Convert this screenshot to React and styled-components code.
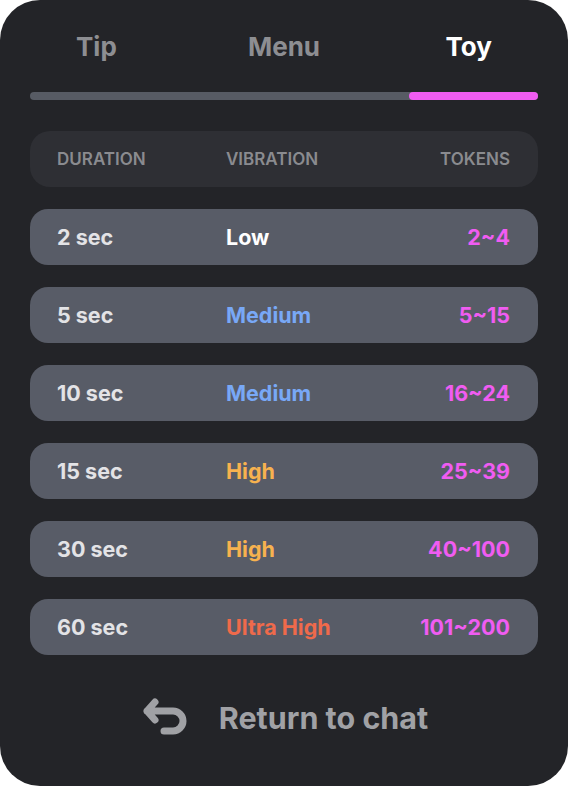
import React, { useState } from "react";
import styled, { createGlobalStyle } from "styled-components";

const Global = createGlobalStyle`
  html, body { margin: 0; padding: 0; background: #ffffff; }
  body { font-family: Inter, "Noto Sans", "Liberation Sans", sans-serif; -webkit-font-smoothing: antialiased; }
  * { box-sizing: border-box; }
`;

const Card = styled.div`
  width: 568px;
  height: 786px;
  background: #232428;
  border-radius: 40px;
  padding: 27px 30px 0;
  display: flex;
  flex-direction: column;
`;

const Tabs = styled.div`
  display: grid;
  grid-template-columns: 1fr auto 1fr;
  padding: 0 46px;
  height: 40px;
  align-items: center;
`;

const Tab = styled.button`
  justify-self: ${(p) => p.$align};
  background: none;
  border: none;
  padding: 0;
  font-family: inherit;
  font-size: 26px;
  font-weight: 700;
  line-height: 40px;
  color: ${(p) => (p.$active ? "#ffffff" : "#8d8e92")};
  cursor: pointer;
`;

const Track = styled.div`
  margin-top: 25px;
  height: 8px;
  border-radius: 4px;
  background: #575b64;
  display: flex;
  justify-content: flex-end;
`;

const Fill = styled.div`
  height: 8px;
  border-radius: 4px;
  background: #f05cf2;
`;

const Grid = styled.div`
  display: grid;
  grid-template-columns: 169px 1fr auto;
  align-items: center;
  height: 56px;
  padding: 0 28px 0 27px;
`;

const HeaderRow = styled(Grid)`
  margin-top: 31px;
  background: #2e2f34;
  border-radius: 20px;
`;

const HeadCell = styled.div`
  font-size: 17px;
  font-weight: 600;
  color: #8a8b8f;
  text-transform: uppercase;
  text-align: ${(p) => (p.$right ? "right" : "left")};
`;

const Rows = styled.div`
  margin-top: 22px;
  display: flex;
  flex-direction: column;
  gap: 22px;
`;

const Row = styled(Grid)`
  background: #585c67;
  border-radius: 18px;
`;

const Cell = styled.div`
  font-size: 21.5px;
  font-weight: 700;
  color: ${(p) => p.$color || "#e3e3e6"};
  text-align: ${(p) => (p.$right ? "right" : "left")};
`;

const ReturnButton = styled.button`
  margin-top: 34px;
  height: 56px;
  align-self: center;
  display: flex;
  align-items: center;
  gap: 29px;
  background: none;
  border: none;
  padding: 0;
  font-family: inherit;
  font-size: 30.5px;
  font-weight: 700;
  color: #a0a1a5;
  cursor: pointer;
`;

const levelColors = {
  Low: "#ffffff",
  Medium: "#78a8f6",
  High: "#f7b24f",
  "Ultra High": "#ef6a4b",
};

const data = [
  ["2 sec", "Low", "2~4"],
  ["5 sec", "Medium", "5~15"],
  ["10 sec", "Medium", "16~24"],
  ["15 sec", "High", "25~39"],
  ["30 sec", "High", "40~100"],
  ["60 sec", "Ultra High", "101~200"],
];

const tabs = [
  ["Tip", "start"],
  ["Menu", "center"],
  ["Toy", "end"],
];

const UndoIcon = () => (
  <svg width="50" height="44" viewBox="0 0 50 44" fill="none">
    <path
      d="M15 7 L7 16 L15 25 M7 16 H33 A10 10 0 0 1 33 36 H24"
      stroke="#a0a1a5"
      strokeWidth="7"
      strokeLinecap="round"
      strokeLinejoin="round"
    />
  </svg>
);

export default function App() {
  const [tab, setTab] = useState("Toy");
  return (
    <>
      <Global />
      <Card>
        <Tabs>
          {tabs.map(([t, a]) => (
            <Tab key={t} $align={a} $active={tab === t} onClick={() => setTab(t)}>
              {t}
            </Tab>
          ))}
        </Tabs>
        <Track>
          <Fill style={{ width: "129px" }} />
        </Track>
        <HeaderRow>
          <HeadCell>Duration</HeadCell>
          <HeadCell>Vibration</HeadCell>
          <HeadCell $right>Tokens</HeadCell>
        </HeaderRow>
        <Rows>
          {data.map(([d, v, t]) => (
            <Row key={d}>
              <Cell>{d}</Cell>
              <Cell $color={levelColors[v]}>{v}</Cell>
              <Cell $right $color="#f05cf2">{t}</Cell>
            </Row>
          ))}
        </Rows>
        <ReturnButton>
          <UndoIcon />
          Return to chat
        </ReturnButton>
      </Card>
    </>
  );
}
